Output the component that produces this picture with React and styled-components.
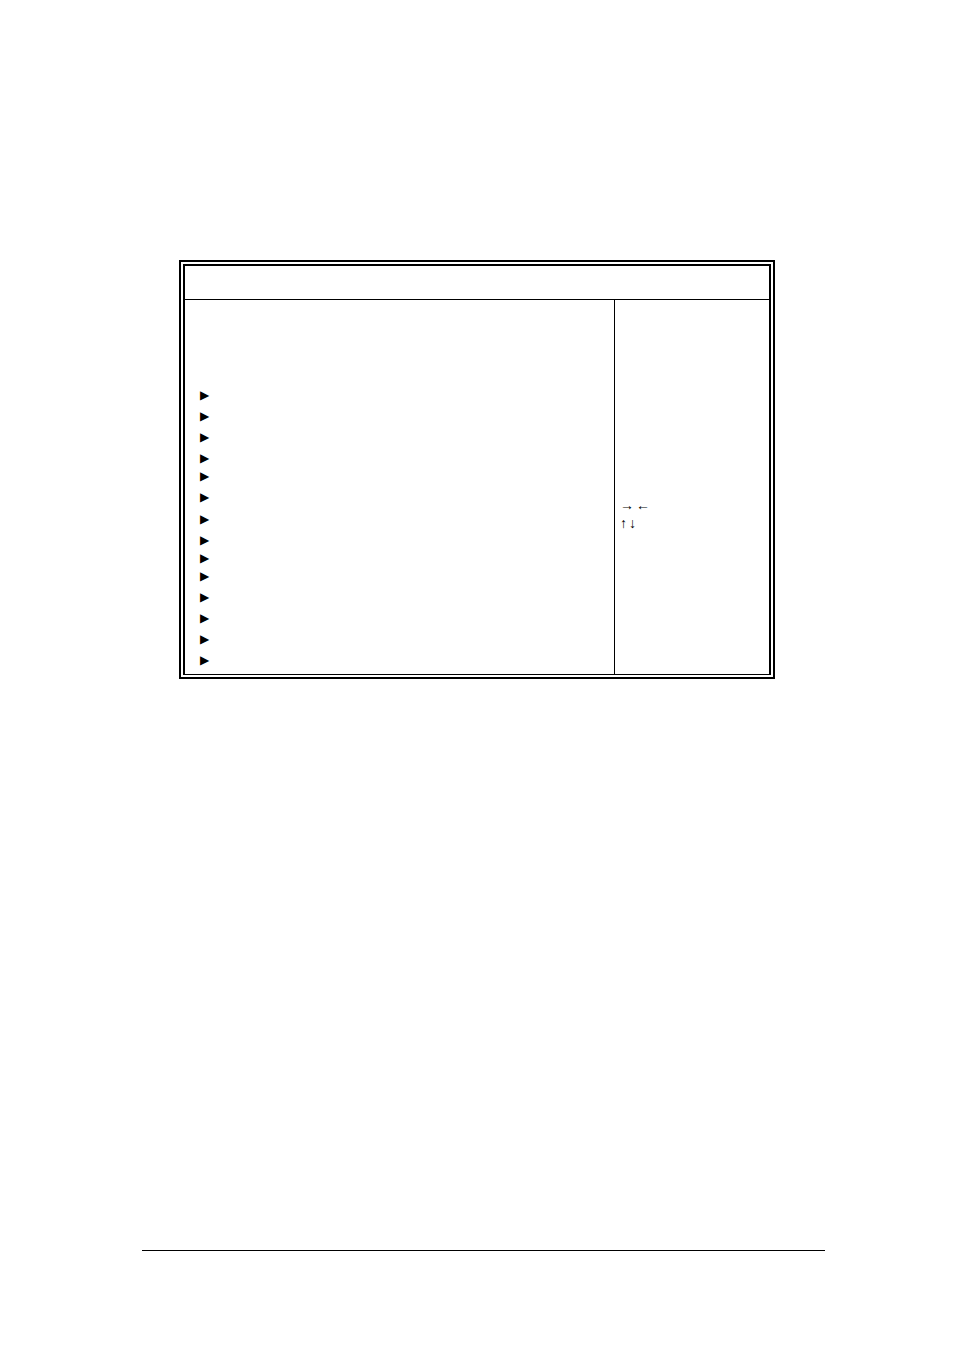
import React from "react";
import styled, { createGlobalStyle } from "styled-components";

const GlobalStyle = createGlobalStyle`
  * { box-sizing: border-box; }
  body {
    margin: 0;
    background: #fff;
    color: #000;
    font-family: "Liberation Serif", "Times New Roman", serif;
  }
`;

const Page = styled.div`
  display: flex;
  flex-direction: column;
  min-height: 100vh;
  padding: 260px 129px 99px 142px;
`;

const Frame = styled.main`
  margin: 0 50px 0 37px;
  padding: 2px;
  border: 2px solid #000;
`;

const Screen = styled.div`
  border: 2px solid #000;
  border-bottom-width: 1px;
`;

const TitleBar = styled.header`
  height: 34px;
  border-bottom: 1px solid #000;
`;

const Body = styled.div`
  display: flex;
`;

const Menu = styled.ul`
  flex: 1;
  margin: 0;
  padding: 83px 15px 5px;
  list-style: none;
`;

const MenuRow = styled.li`
  display: flex;
  align-items: flex-end;
  height: ${(p) => p.$height}px;
  font-family: "DejaVu Sans", sans-serif;
  font-size: 12px;
  line-height: 18px;
`;

const HelpPanel = styled.aside`
  width: 155px;
  padding: 197px 5px 0;
  border-left: 1px solid #000;
`;

const KeyHint = styled.div`
  display: flex;
  gap: 2px;
  font-size: 14px;
  line-height: 18px;
`;

const FooterRule = styled.hr`
  width: 100%;
  margin: auto 0 0;
  border: 0;
  border-top: 1px solid #000;
`;

const rowHeights = [21, 21, 21, 21, 18, 21, 22, 21, 18, 18, 21, 21, 21, 21];

export default function App() {
  return (
    <>
      <GlobalStyle />
      <Page>
        <Frame>
          <Screen>
            <TitleBar />
            <Body>
              <Menu>
                {rowHeights.map((height, i) => (
                  <MenuRow key={i} $height={height}>▶</MenuRow>
                ))}
              </Menu>
              <HelpPanel>
                <KeyHint><span>→</span><span>←</span></KeyHint>
                <KeyHint><span>↑</span><span>↓</span></KeyHint>
              </HelpPanel>
            </Body>
          </Screen>
        </Frame>
        <FooterRule />
      </Page>
    </>
  );
}
